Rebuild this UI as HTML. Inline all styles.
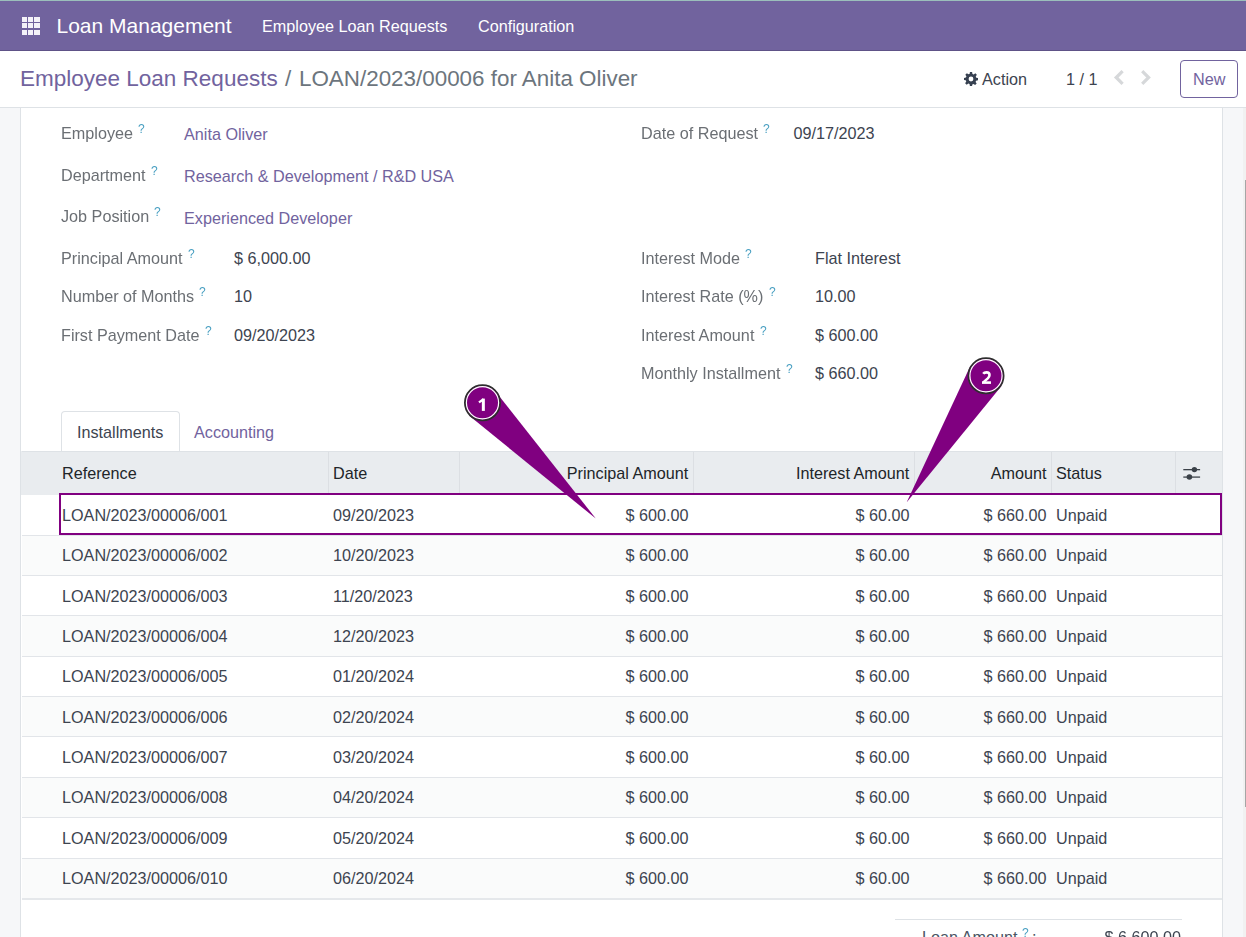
<!DOCTYPE html>
<html><head><meta charset="utf-8"><style>
*{box-sizing:border-box;margin:0;padding:0}
html,body{width:1246px;height:937px;overflow:hidden;background:#fff;font-family:"Liberation Sans",sans-serif;color:#374151}
.a{position:absolute;white-space:nowrap;line-height:1}
.q{color:#4aa0c2;font-size:12px;will-change:transform}
.bx{position:absolute}
</style></head><body>
<div class="bx" style="left:0;top:0;width:1246px;height:1px;background:#9bbfbb"></div>
<div class="bx" style="left:0;top:1px;width:1246px;height:50px;background:#71639e"></div>
<div class="bx" style="left:0;top:50px;width:1246px;height:1px;background:#5e5287"></div>
<div class="bx" style="left:21.50px;top:16.50px;width:5.2px;height:5.2px;background:#f4f2f8"></div>
<div class="bx" style="left:21.50px;top:23.15px;width:5.2px;height:5.2px;background:#f4f2f8"></div>
<div class="bx" style="left:21.50px;top:29.80px;width:5.2px;height:5.2px;background:#f4f2f8"></div>
<div class="bx" style="left:27.95px;top:16.50px;width:5.2px;height:5.2px;background:#f4f2f8"></div>
<div class="bx" style="left:27.95px;top:23.15px;width:5.2px;height:5.2px;background:#f4f2f8"></div>
<div class="bx" style="left:27.95px;top:29.80px;width:5.2px;height:5.2px;background:#f4f2f8"></div>
<div class="bx" style="left:34.40px;top:16.50px;width:5.2px;height:5.2px;background:#f4f2f8"></div>
<div class="bx" style="left:34.40px;top:23.15px;width:5.2px;height:5.2px;background:#f4f2f8"></div>
<div class="bx" style="left:34.40px;top:29.80px;width:5.2px;height:5.2px;background:#f4f2f8"></div>
<div class="a" style="left:56.5px;top:15px;font-size:21px;color:#fff;">Loan Management</div>
<div class="a" style="left:262px;top:18px;font-size:16.2px;color:#fff;">Employee Loan Requests</div>
<div class="a" style="left:478px;top:18px;font-size:16.2px;color:#fff;">Configuration</div>
<div class="bx" style="left:0;top:107px;width:1246px;height:1px;background:#dee2e6"></div>
<div class="a" style="left:20px;top:68px;font-size:22.5px;color:#71639e;">Employee Loan Requests</div>
<div class="a" style="left:285px;top:68px;font-size:22.5px;color:#6c757d;">/</div>
<div class="a" style="left:299px;top:68px;font-size:22.4px;color:#6c757d;">LOAN/2023/00006 for Anita Oliver</div>
<svg class="bx" style="left:963px;top:71px" width="16" height="16" viewBox="0 0 16 16"><path fill="#374151" fill-rule="evenodd" d="M6.9 1h2.2l.35 1.9 1.25.52 1.6-1.1 1.55 1.55-1.1 1.6.52 1.25L15 7.1v2.2l-1.9.35-.52 1.25 1.1 1.6-1.55 1.55-1.6-1.1-1.25.52L9.1 15H6.9l-.35-1.9-1.25-.52-1.6 1.1-1.55-1.55 1.1-1.6-.52-1.25L1 9.1V6.9l1.9-.35.52-1.25-1.1-1.6 1.55-1.55 1.6 1.1 1.25-.52zM8 5.6a2.4 2.4 0 1 0 0 4.8 2.4 2.4 0 1 0 0-4.8z"/></svg>
<div class="a" style="left:982px;top:71px;font-size:16.2px;color:#3d4450;">Action</div>
<div class="a" style="left:1066px;top:71px;font-size:16.2px;color:#3d4450;">1 / 1</div>
<svg class="bx" style="left:1100px;top:62px" width="60" height="30"><path d="M22.6 9.1L16.2 15.5l6.4 6.4" fill="none" stroke="#d6d8da" stroke-width="3.2" stroke-linecap="butt" stroke-linejoin="miter"/><path d="M42.2 9.1l6.4 6.4-6.4 6.4" fill="none" stroke="#d6d8da" stroke-width="3.2" stroke-linecap="butt" stroke-linejoin="miter"/></svg>
<div class="bx" style="left:1180px;top:60px;width:58px;height:38px;border:1px solid #71639e;border-radius:4px"></div>
<div class="a" style="left:1193px;top:71px;font-size:16.2px;color:#71639e;">New</div>
<div class="bx" style="left:0;top:108px;width:20px;height:829px;background:#f6f7f9"></div>
<div class="bx" style="left:20px;top:108px;width:1px;height:829px;background:#dee2e6"></div>
<div class="bx" style="left:1222px;top:108px;width:1px;height:829px;background:#dee2e6"></div>
<div class="bx" style="left:1223px;top:108px;width:23px;height:829px;background:#f6f7f9"></div>
<div class="bx" style="left:1243px;top:108px;width:3px;height:829px;background:#f1f1f1"></div>
<div class="bx" style="left:1245px;top:180px;width:1px;height:627px;background:#a6a6a6"></div>
<div class="a" style="left:61px;top:125px;font-size:16.2px;color:#6b6f74;will-change:transform;">Employee</div>
<div class="a q" style="left:137.5px;top:123px">?</div>
<div class="a" style="left:184px;top:126px;font-size:16.2px;color:#71639e;">Anita Oliver</div>
<div class="a" style="left:61px;top:167px;font-size:16.2px;color:#6b6f74;will-change:transform;">Department</div>
<div class="a q" style="left:150.5px;top:165px">?</div>
<div class="a" style="left:184px;top:168px;font-size:16.2px;color:#71639e;">Research &amp; Development / R&amp;D USA</div>
<div class="a" style="left:61px;top:208px;font-size:16.2px;color:#6b6f74;will-change:transform;">Job Position</div>
<div class="a q" style="left:153.5px;top:206px">?</div>
<div class="a" style="left:184px;top:210px;font-size:16.2px;color:#71639e;">Experienced Developer</div>
<div class="a" style="left:61px;top:250px;font-size:16.2px;color:#6b6f74;will-change:transform;">Principal Amount</div>
<div class="a q" style="left:187.5px;top:248px">?</div>
<div class="a" style="left:234px;top:250px;font-size:16.2px;color:#3d4450;">$ 6,000.00</div>
<div class="a" style="left:61px;top:288px;font-size:16.2px;color:#6b6f74;will-change:transform;">Number of Months</div>
<div class="a q" style="left:199px;top:286px">?</div>
<div class="a" style="left:234px;top:288px;font-size:16.2px;color:#3d4450;">10</div>
<div class="a" style="left:61px;top:327px;font-size:16.2px;color:#6b6f74;will-change:transform;">First Payment Date</div>
<div class="a q" style="left:204.5px;top:325px">?</div>
<div class="a" style="left:234px;top:327px;font-size:16.2px;color:#3d4450;">09/20/2023</div>
<div class="a" style="left:641px;top:125px;font-size:16.2px;color:#6b6f74;will-change:transform;">Date of Request</div>
<div class="a q" style="left:763px;top:123px">?</div>
<div class="a" style="left:793.5px;top:125px;font-size:16.2px;color:#3d4450;">09/17/2023</div>
<div class="a" style="left:641px;top:250px;font-size:16.2px;color:#6b6f74;will-change:transform;">Interest Mode</div>
<div class="a q" style="left:745px;top:248px">?</div>
<div class="a" style="left:815px;top:250px;font-size:16.2px;color:#3d4450;">Flat Interest</div>
<div class="a" style="left:641px;top:288px;font-size:16.2px;color:#6b6f74;will-change:transform;">Interest Rate (%)</div>
<div class="a q" style="left:768.5px;top:286px">?</div>
<div class="a" style="left:815px;top:288px;font-size:16.2px;color:#3d4450;">10.00</div>
<div class="a" style="left:641px;top:327px;font-size:16.2px;color:#6b6f74;will-change:transform;">Interest Amount</div>
<div class="a q" style="left:759.5px;top:325px">?</div>
<div class="a" style="left:815px;top:327px;font-size:16.2px;color:#3d4450;">$ 600.00</div>
<div class="a" style="left:641px;top:365px;font-size:16.2px;color:#6b6f74;will-change:transform;">Monthly Installment</div>
<div class="a q" style="left:785.5px;top:363px">?</div>
<div class="a" style="left:815px;top:365px;font-size:16.2px;color:#3d4450;">$ 660.00</div>
<div class="bx" style="left:61px;top:411px;width:119px;height:41px;border:1px solid #dee2e6;border-bottom:none;border-radius:4px 4px 0 0;background:#fff"></div>
<div class="a" style="left:77px;top:424px;font-size:16.2px;color:#3d4450;">Installments</div>
<div class="a" style="left:194px;top:424px;font-size:16.2px;color:#71639e;">Accounting</div>
<div class="bx" style="left:21px;top:451px;width:1201px;height:44px;background:#e9ecef"></div>
<div class="bx" style="left:22px;top:451px;width:1200px;height:1px;background:#dee2e6"></div>
<div class="bx" style="left:328px;top:452px;width:1px;height:42px;background:#dcdfe3"></div>
<div class="bx" style="left:459px;top:452px;width:1px;height:42px;background:#dcdfe3"></div>
<div class="bx" style="left:693px;top:452px;width:1px;height:42px;background:#dcdfe3"></div>
<div class="bx" style="left:914px;top:452px;width:1px;height:42px;background:#dcdfe3"></div>
<div class="bx" style="left:1051px;top:452px;width:1px;height:42px;background:#dcdfe3"></div>
<div class="bx" style="left:1175px;top:452px;width:1px;height:42px;background:#dcdfe3"></div>
<div class="a" style="left:62px;top:465px;font-size:16.2px;color:#212529;">Reference</div>
<div class="a" style="left:333px;top:465px;font-size:16.2px;color:#212529;">Date</div>
<div class="a" style="left:288.29999999999995px;top:465px;width:400px;text-align:right;font-size:16.2px;color:#212529;">Principal Amount</div>
<div class="a" style="left:509.29999999999995px;top:465px;width:400px;text-align:right;font-size:16.2px;color:#212529;">Interest Amount</div>
<div class="a" style="left:646.5px;top:465px;width:400px;text-align:right;font-size:16.2px;color:#212529;">Amount</div>
<div class="a" style="left:1056px;top:465px;font-size:16.2px;color:#212529;">Status</div>
<svg class="bx" style="left:1176px;top:460px" width="34" height="28"><rect x="7.3" y="9" width="16.8" height="1.3" fill="#3b4148"/><rect x="7.3" y="16.4" width="16.8" height="1.4" fill="#4b5057"/><circle cx="18.4" cy="9.6" r="2.7" fill="#3b4148"/><circle cx="13.4" cy="17" r="2.8" fill="#3b4148"/></svg>
<div class="a" style="left:62px;top:507px;font-size:16.2px;color:#3d4450;">LOAN/2023/00006/001</div>
<div class="a" style="left:333px;top:507px;font-size:16.2px;color:#3d4450;">09/20/2023</div>
<div class="a" style="left:288.5px;top:507px;width:400px;text-align:right;font-size:16.2px;color:#3d4450;">$ 600.00</div>
<div class="a" style="left:509.5px;top:507px;width:400px;text-align:right;font-size:16.2px;color:#3d4450;">$ 60.00</div>
<div class="a" style="left:646.5px;top:507px;width:400px;text-align:right;font-size:16.2px;color:#3d4450;">$ 660.00</div>
<div class="a" style="left:1056px;top:507px;font-size:16.2px;color:#3d4450;">Unpaid</div>
<div class="bx" style="left:22px;top:535px;width:1200px;height:40px;background:#fafbfb"></div>
<div class="bx" style="left:22px;top:535px;width:1200px;height:1px;background:#e2e5e9"></div>
<div class="a" style="left:62px;top:547px;font-size:16.2px;color:#3d4450;">LOAN/2023/00006/002</div>
<div class="a" style="left:333px;top:547px;font-size:16.2px;color:#3d4450;">10/20/2023</div>
<div class="a" style="left:288.5px;top:547px;width:400px;text-align:right;font-size:16.2px;color:#3d4450;">$ 600.00</div>
<div class="a" style="left:509.5px;top:547px;width:400px;text-align:right;font-size:16.2px;color:#3d4450;">$ 60.00</div>
<div class="a" style="left:646.5px;top:547px;width:400px;text-align:right;font-size:16.2px;color:#3d4450;">$ 660.00</div>
<div class="a" style="left:1056px;top:547px;font-size:16.2px;color:#3d4450;">Unpaid</div>
<div class="bx" style="left:22px;top:575px;width:1200px;height:1px;background:#e2e5e9"></div>
<div class="a" style="left:62px;top:588px;font-size:16.2px;color:#3d4450;">LOAN/2023/00006/003</div>
<div class="a" style="left:333px;top:588px;font-size:16.2px;color:#3d4450;">11/20/2023</div>
<div class="a" style="left:288.5px;top:588px;width:400px;text-align:right;font-size:16.2px;color:#3d4450;">$ 600.00</div>
<div class="a" style="left:509.5px;top:588px;width:400px;text-align:right;font-size:16.2px;color:#3d4450;">$ 60.00</div>
<div class="a" style="left:646.5px;top:588px;width:400px;text-align:right;font-size:16.2px;color:#3d4450;">$ 660.00</div>
<div class="a" style="left:1056px;top:588px;font-size:16.2px;color:#3d4450;">Unpaid</div>
<div class="bx" style="left:22px;top:615px;width:1200px;height:41px;background:#fafbfb"></div>
<div class="bx" style="left:22px;top:615px;width:1200px;height:1px;background:#e2e5e9"></div>
<div class="a" style="left:62px;top:628px;font-size:16.2px;color:#3d4450;">LOAN/2023/00006/004</div>
<div class="a" style="left:333px;top:628px;font-size:16.2px;color:#3d4450;">12/20/2023</div>
<div class="a" style="left:288.5px;top:628px;width:400px;text-align:right;font-size:16.2px;color:#3d4450;">$ 600.00</div>
<div class="a" style="left:509.5px;top:628px;width:400px;text-align:right;font-size:16.2px;color:#3d4450;">$ 60.00</div>
<div class="a" style="left:646.5px;top:628px;width:400px;text-align:right;font-size:16.2px;color:#3d4450;">$ 660.00</div>
<div class="a" style="left:1056px;top:628px;font-size:16.2px;color:#3d4450;">Unpaid</div>
<div class="bx" style="left:22px;top:656px;width:1200px;height:1px;background:#e2e5e9"></div>
<div class="a" style="left:62px;top:668px;font-size:16.2px;color:#3d4450;">LOAN/2023/00006/005</div>
<div class="a" style="left:333px;top:668px;font-size:16.2px;color:#3d4450;">01/20/2024</div>
<div class="a" style="left:288.5px;top:668px;width:400px;text-align:right;font-size:16.2px;color:#3d4450;">$ 600.00</div>
<div class="a" style="left:509.5px;top:668px;width:400px;text-align:right;font-size:16.2px;color:#3d4450;">$ 60.00</div>
<div class="a" style="left:646.5px;top:668px;width:400px;text-align:right;font-size:16.2px;color:#3d4450;">$ 660.00</div>
<div class="a" style="left:1056px;top:668px;font-size:16.2px;color:#3d4450;">Unpaid</div>
<div class="bx" style="left:22px;top:696px;width:1200px;height:40px;background:#fafbfb"></div>
<div class="bx" style="left:22px;top:696px;width:1200px;height:1px;background:#e2e5e9"></div>
<div class="a" style="left:62px;top:709px;font-size:16.2px;color:#3d4450;">LOAN/2023/00006/006</div>
<div class="a" style="left:333px;top:709px;font-size:16.2px;color:#3d4450;">02/20/2024</div>
<div class="a" style="left:288.5px;top:709px;width:400px;text-align:right;font-size:16.2px;color:#3d4450;">$ 600.00</div>
<div class="a" style="left:509.5px;top:709px;width:400px;text-align:right;font-size:16.2px;color:#3d4450;">$ 60.00</div>
<div class="a" style="left:646.5px;top:709px;width:400px;text-align:right;font-size:16.2px;color:#3d4450;">$ 660.00</div>
<div class="a" style="left:1056px;top:709px;font-size:16.2px;color:#3d4450;">Unpaid</div>
<div class="bx" style="left:22px;top:736px;width:1200px;height:1px;background:#e2e5e9"></div>
<div class="a" style="left:62px;top:749px;font-size:16.2px;color:#3d4450;">LOAN/2023/00006/007</div>
<div class="a" style="left:333px;top:749px;font-size:16.2px;color:#3d4450;">03/20/2024</div>
<div class="a" style="left:288.5px;top:749px;width:400px;text-align:right;font-size:16.2px;color:#3d4450;">$ 600.00</div>
<div class="a" style="left:509.5px;top:749px;width:400px;text-align:right;font-size:16.2px;color:#3d4450;">$ 60.00</div>
<div class="a" style="left:646.5px;top:749px;width:400px;text-align:right;font-size:16.2px;color:#3d4450;">$ 660.00</div>
<div class="a" style="left:1056px;top:749px;font-size:16.2px;color:#3d4450;">Unpaid</div>
<div class="bx" style="left:22px;top:777px;width:1200px;height:40px;background:#fafbfb"></div>
<div class="bx" style="left:22px;top:777px;width:1200px;height:1px;background:#e2e5e9"></div>
<div class="a" style="left:62px;top:789px;font-size:16.2px;color:#3d4450;">LOAN/2023/00006/008</div>
<div class="a" style="left:333px;top:789px;font-size:16.2px;color:#3d4450;">04/20/2024</div>
<div class="a" style="left:288.5px;top:789px;width:400px;text-align:right;font-size:16.2px;color:#3d4450;">$ 600.00</div>
<div class="a" style="left:509.5px;top:789px;width:400px;text-align:right;font-size:16.2px;color:#3d4450;">$ 60.00</div>
<div class="a" style="left:646.5px;top:789px;width:400px;text-align:right;font-size:16.2px;color:#3d4450;">$ 660.00</div>
<div class="a" style="left:1056px;top:789px;font-size:16.2px;color:#3d4450;">Unpaid</div>
<div class="bx" style="left:22px;top:817px;width:1200px;height:1px;background:#e2e5e9"></div>
<div class="a" style="left:62px;top:830px;font-size:16.2px;color:#3d4450;">LOAN/2023/00006/009</div>
<div class="a" style="left:333px;top:830px;font-size:16.2px;color:#3d4450;">05/20/2024</div>
<div class="a" style="left:288.5px;top:830px;width:400px;text-align:right;font-size:16.2px;color:#3d4450;">$ 600.00</div>
<div class="a" style="left:509.5px;top:830px;width:400px;text-align:right;font-size:16.2px;color:#3d4450;">$ 60.00</div>
<div class="a" style="left:646.5px;top:830px;width:400px;text-align:right;font-size:16.2px;color:#3d4450;">$ 660.00</div>
<div class="a" style="left:1056px;top:830px;font-size:16.2px;color:#3d4450;">Unpaid</div>
<div class="bx" style="left:22px;top:858px;width:1200px;height:40px;background:#fafbfb"></div>
<div class="bx" style="left:22px;top:858px;width:1200px;height:1px;background:#e2e5e9"></div>
<div class="a" style="left:62px;top:870px;font-size:16.2px;color:#3d4450;">LOAN/2023/00006/010</div>
<div class="a" style="left:333px;top:870px;font-size:16.2px;color:#3d4450;">06/20/2024</div>
<div class="a" style="left:288.5px;top:870px;width:400px;text-align:right;font-size:16.2px;color:#3d4450;">$ 600.00</div>
<div class="a" style="left:509.5px;top:870px;width:400px;text-align:right;font-size:16.2px;color:#3d4450;">$ 60.00</div>
<div class="a" style="left:646.5px;top:870px;width:400px;text-align:right;font-size:16.2px;color:#3d4450;">$ 660.00</div>
<div class="a" style="left:1056px;top:870px;font-size:16.2px;color:#3d4450;">Unpaid</div>
<div class="bx" style="left:22px;top:898px;width:1200px;height:2px;background:#e5e8eb"></div>
<div class="bx" style="left:895px;top:919px;width:287px;height:1px;background:#dee2e6"></div>
<div class="a" style="left:922px;top:929px;font-size:16.2px;color:#4b5563;">Loan Amount</div>
<div class="a q" style="left:1022px;top:927px">?</div>
<div class="a" style="left:1032px;top:929px;font-size:16.2px;color:#4b5563;">:</div>
<div class="a" style="left:781px;top:929px;width:400px;text-align:right;font-size:16.2px;color:#3d4450;">$ 6,600.00</div>
<svg class="bx" style="left:0;top:0" width="1246" height="937"><rect x="60" y="494" width="1161" height="40" fill="none" stroke="#800080" stroke-width="2"/><polygon points="469.28,415.74 494.94,390.63 595.8,518.6" fill="#800080"/><circle cx="482.5" cy="402.8" r="17.6" fill="#800080" stroke="#2e2e2e" stroke-width="1.8"/><circle cx="482.5" cy="402.8" r="16.1" fill="none" stroke="#fff" stroke-width="1.2"/><path d="M483.35 410.9V398.6" stroke="#fff" stroke-width="3" fill="none"/><path d="M483.6 399.2L479 402.4" stroke="#fff" stroke-width="2.3" fill="none"/><polygon points="970.33,365.97 1001.67,385.63 906.7,502.3" fill="#800080"/><circle cx="986" cy="375.8" r="17.6" fill="#800080" stroke="#2e2e2e" stroke-width="1.8"/><circle cx="986" cy="375.8" r="16.1" fill="none" stroke="#fff" stroke-width="1.2"/><path d="M983.2 373.8Q984.2 372.4 986.5 372.4Q989.5 372.4 989.5 375Q989.5 376.8 987.8 378.4L983.3 382.4" stroke="#fff" stroke-width="2.6" fill="none"/><rect x="982" y="381.3" width="9" height="2.6" fill="#fff"/></svg>
</body></html>
